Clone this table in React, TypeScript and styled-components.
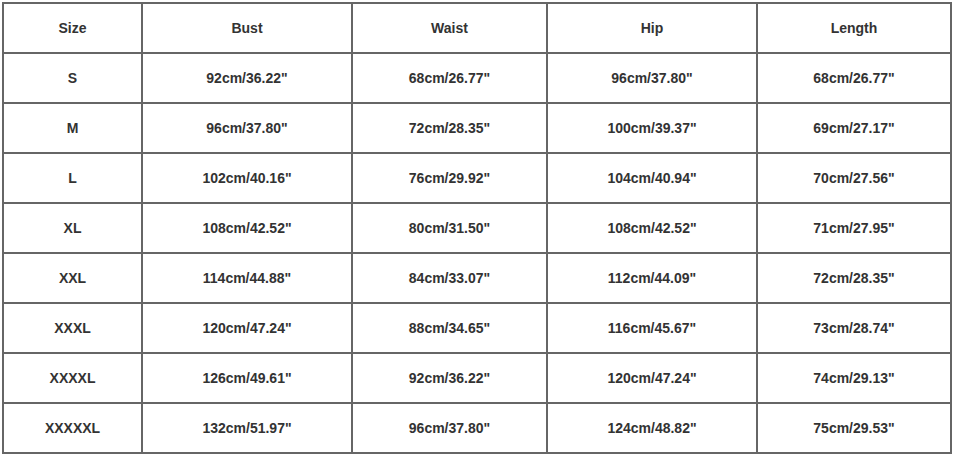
import React from "react";
import styled, { createGlobalStyle } from "styled-components";

const GlobalStyle = createGlobalStyle`
  html, body {
    margin: 0;
    padding: 0;
    background: #ffffff;
  }
`;

const Grid = styled.div`
  display: grid;
  grid-template-columns: 139px 210px 195px 210px 194px;
  grid-auto-rows: 50px;
  width: fit-content;
  margin: 2px 0 0 2px;
  border-top: 2px solid #666666;
  border-left: 2px solid #666666;
  font-family: "Liberation Sans", Arial, sans-serif;
  font-size: 14px;
  font-weight: 700;
  color: #333333;
`;

const Cell = styled.div`
  display: flex;
  align-items: center;
  justify-content: center;
  border-right: 2px solid #666666;
  border-bottom: 2px solid #666666;
  white-space: nowrap;
`;

const headers = ["Size", "Bust", "Waist", "Hip", "Length"];

const rows: string[][] = [
  ["S", "92cm/36.22\"", "68cm/26.77\"", "96cm/37.80\"", "68cm/26.77\""],
  ["M", "96cm/37.80\"", "72cm/28.35\"", "100cm/39.37\"", "69cm/27.17\""],
  ["L", "102cm/40.16\"", "76cm/29.92\"", "104cm/40.94\"", "70cm/27.56\""],
  ["XL", "108cm/42.52\"", "80cm/31.50\"", "108cm/42.52\"", "71cm/27.95\""],
  ["XXL", "114cm/44.88\"", "84cm/33.07\"", "112cm/44.09\"", "72cm/28.35\""],
  ["XXXL", "120cm/47.24\"", "88cm/34.65\"", "116cm/45.67\"", "73cm/28.74\""],
  ["XXXXL", "126cm/49.61\"", "92cm/36.22\"", "120cm/47.24\"", "74cm/29.13\""],
  ["XXXXXL", "132cm/51.97\"", "96cm/37.80\"", "124cm/48.82\"", "75cm/29.53\""],
];

const App = () => {
  return (
    <>
      <GlobalStyle />
      <Grid>
        {headers.map((h) => (
          <Cell key={h}>{h}</Cell>
        ))}
        {rows.map((row) =>
          row.map((value, i) => <Cell key={row[0] + i}>{value}</Cell>)
        )}
      </Grid>
    </>
  );
};

export default App;
